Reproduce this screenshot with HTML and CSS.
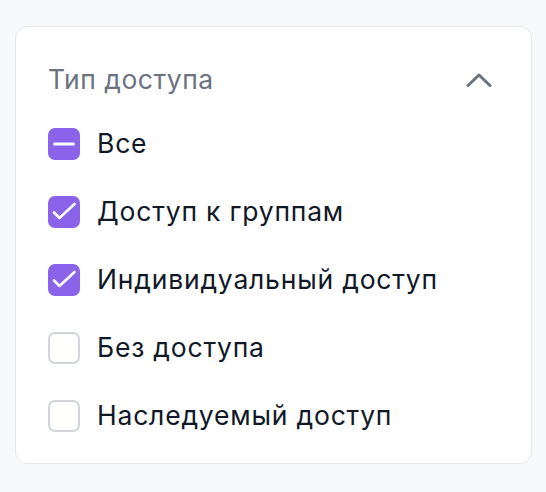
FILE: index.html
```html
<!DOCTYPE html>
<html lang="ru">
<head>
<meta charset="utf-8">
<link rel="stylesheet" href="styles.css">
</head>
<body>
<div class="card">
  <div class="header">
    <span class="title">Тип доступа</span>
    <svg class="chevron" width="26" height="16" viewBox="0 0 26 16" fill="none">
      <path d="M2 13.5 L13 3 L24 13.5" stroke="#6b7280" stroke-width="3" stroke-linecap="round" stroke-linejoin="round"/>
    </svg>
  </div>
  <ul class="list">
    <li class="item">
      <span class="box box-on">
        <svg width="32" height="32" viewBox="0 0 32 32" fill="none"><path d="M6.5 16 H25.5" stroke="#fff" stroke-width="3" stroke-linecap="round"/></svg>
      </span>
      <span class="label">Все</span>
    </li>
    <li class="item">
      <span class="box box-on">
        <svg width="32" height="32" viewBox="0 0 32 32" fill="none"><path d="M6 16.5 L11.5 22 L26.5 8" stroke="#fff" stroke-width="2.6" stroke-linecap="round" stroke-linejoin="round"/></svg>
      </span>
      <span class="label">Доступ к группам</span>
    </li>
    <li class="item">
      <span class="box box-on">
        <svg width="32" height="32" viewBox="0 0 32 32" fill="none"><path d="M6 16.5 L11.5 22 L26.5 8" stroke="#fff" stroke-width="2.6" stroke-linecap="round" stroke-linejoin="round"/></svg>
      </span>
      <span class="label">Индивидуальный доступ</span>
    </li>
    <li class="item">
      <span class="box box-off"></span>
      <span class="label">Без доступа</span>
    </li>
    <li class="item">
      <span class="box box-off"></span>
      <span class="label">Наследуемый доступ</span>
    </li>
  </ul>
</div>
</body>
</html>
```

FILE: styles.css
```css
html, body {
  margin: 0;
  padding: 0;
  background: #f8f9fb;
}
body {
  font-family: Inter, "Noto Sans", sans-serif;
  padding: 26px 14px 0 15px;
}
.card {
  box-sizing: border-box;
  width: 517px;
  height: 438px;
  background: #ffffff;
  border: 1.5px solid #e5e7eb;
  border-radius: 12px;
  padding: 30px 39px 0 32px;
}
.header {
  display: flex;
  align-items: center;
  justify-content: space-between;
  height: 44px;
}
.title {
  font-size: 26.5px;
  letter-spacing: 0.5px;
  color: #6b7280;
  line-height: 44px;
}
.chevron {
  display: block;
  margin-top: 2px;
}
.list {
  list-style: none;
  margin: 27px 0 0 0;
  padding: 0;
  display: flex;
  flex-direction: column;
  gap: 36px;
}
.item {
  display: flex;
  align-items: center;
  gap: 17px;
  height: 32px;
}
.box {
  width: 32px;
  height: 32px;
  box-sizing: border-box;
  border-radius: 7px;
  flex: none;
}
.box svg {
  display: block;
}
.box-on {
  background: #8b62ea;
}
.box-off {
  background: #fff;
  border: 2px solid #d1d5db;
}
.label {
  font-size: 26.5px;
  letter-spacing: 0.8px;
  color: #111827;
  line-height: 32px;
  margin-top: -3px;
}
```
